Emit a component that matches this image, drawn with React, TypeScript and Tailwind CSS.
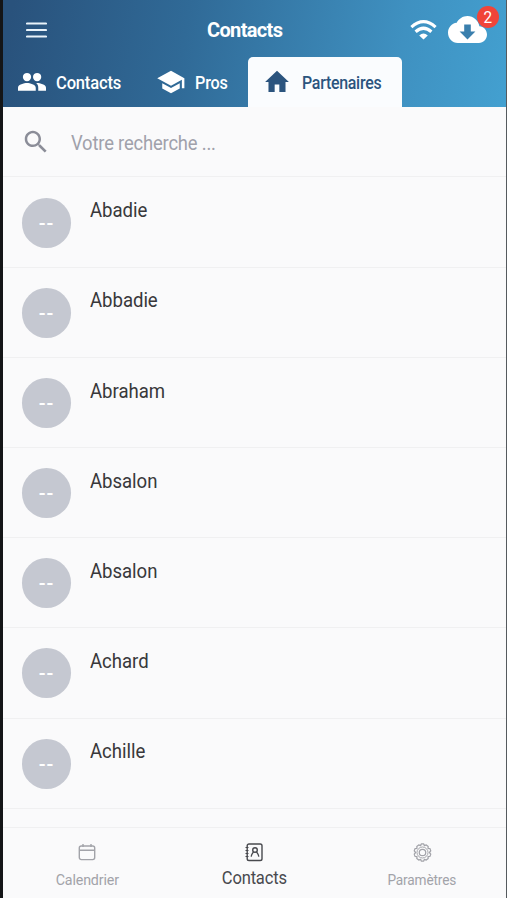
import React from "react";

const contacts = ["Abadie", "Abbadie", "Abraham", "Absalon", "Absalon", "Achard", "Achille"];

function Header() {
  return (
    <header className="flex h-[107px] shrink-0 flex-col bg-linear-[100deg,#29527c_2%,#306a97_36%,#3f91c1_78%,#43a0d0_100%] text-white">
      <div className="flex h-[57px] shrink-0 items-center">
        <svg className="mt-[2px] ml-[23px] h-[18px] w-[21px]" viewBox="0 0 20 18" preserveAspectRatio="none" stroke="#e9f3fa" strokeWidth="2.2" strokeLinecap="round">
          <path d="M1 2.5h18M1 9h18M1 15.5h18" />
        </svg>
        <h1 className="mt-[3px] ml-[160px] w-20 text-[20px] leading-6 font-bold tracking-[-0.65px] whitespace-nowrap">Contacts</h1>
        <svg className="mt-[2px] ml-[123px] h-5 w-[27px] shrink-0" viewBox="0 0 27 20" fill="none" stroke="white" strokeWidth="3.2">
          <path d="M1.4 7.1Q13.5-3.7 25.6 7.1" />
          <path d="M5.6 11.7Q13.5 4.8 21.4 11.7" />
          <path d="M9.2 15.4Q13.5 11.8 17.8 15.4L13.5 19.6Z" fill="white" stroke="none" />
        </svg>
        <div className="relative mt-[2px] ml-[11px] h-[27px] w-[39px] shrink-0">
          <svg className="h-full w-full" viewBox="0 0 39 27">
            <path fill="white" d="M31.4 10.2C30.2 4.3 25.5 0 19.5 0 14.8 0 10.7 2.8 8.7 6.8 3.8 7.3 0 11.6 0 16.8 0 22.4 4.4 27 9.8 27h21.1c4.5 0 8.1-3.8 8.1-8.4 0-4.5-3.3-8.1-7.6-8.4z" />
            <path fill="#3a7fad" d="M16.2 8.6h6.6v7h4.6l-7.9 7.8-7.9-7.8h4.6z" />
          </svg>
          <span className="absolute -top-[10px] left-[29px] flex h-[22px] w-[22px] items-center justify-center rounded-full bg-[#f04438] text-[17px] leading-none"><span className="scale-x-90">2</span></span>
        </div>
      </div>
      <nav className="flex h-[50px] text-[18px] font-medium">
        <div className="flex w-[140px] items-center pl-[14px]">
          <svg className="h-[30px] w-[30px]" viewBox="0 0 24 24" fill="white">
            <circle cx="8" cy="8" r="3.3" />
            <circle cx="16.1" cy="8" r="3.3" />
            <path d="M8 12.8c-2.33 0-7.2 1.17-7.2 3.7V19h14.2v-2.5c0-2.53-4.67-3.7-7-3.7zM16 12.8c-.29 0-.52.02-.77.05 1.16.84 1.77 1.97 1.77 3.65V19h6.2v-2.5c0-2.53-4.87-3.7-7.2-3.7z" />
          </svg>
          <span className="mt-px ml-[9px] origin-left scale-x-[0.92] tracking-[-0.2px]">Contacts</span>
        </div>
        <div className="flex w-[105px] items-center pl-[13px]">
          <svg className="h-[30px] w-[30px]" viewBox="0 0 24 24" fill="white">
            <path d="M5 13v4.2L12 21l7-3.82V13l-7 3.82zM12 3L1 9l11 6 8.7-4.75V17H22.7V9L12 3z" />
          </svg>
          <span className="mt-px ml-[9px] origin-left scale-x-[0.9] tracking-[-0.2px]">Pros</span>
        </div>
        <div className="flex w-[154px] items-center rounded-t-[5px] bg-[#fafcfe] pl-[15px] text-[#2b547e]">
          <svg className="h-[30px] w-[28px]" viewBox="0 0 24 24" preserveAspectRatio="none" fill="currentColor">
            <path d="M10 20v-6h4v6h5.3v-8h2.9L12 3 1.8 12h2.9v8z" />
          </svg>
          <span className="mt-px ml-[11px] origin-left scale-x-[0.885] tracking-[-0.3px]">Partenaires</span>
        </div>
      </nav>
    </header>
  );
}

function ContactRow({ name }: { name: string }) {
  return (
    <li className="flex h-[90.17px] border-b border-[#f0f0f1]">
      <div className="mt-5 ml-[19px] flex h-[50px] w-[49px] items-center justify-center rounded-full bg-[#c5c8d1] text-[20px] text-white">
        <span className="leading-none font-medium tracking-[1px]">--</span>
      </div>
      <span className="mt-[20.6px] ml-[19px] origin-left scale-x-[0.93] text-[20px] leading-6 tracking-[-0.05px] text-[#38383a]">{name}</span>
    </li>
  );
}

function TabBar() {
  return (
    <footer className="grid h-[71px] grid-cols-3 border-t border-[#f0f0f1] bg-[#fafafb] text-[15px] text-[#a2a3a9]">
      <div className="flex flex-col items-center pt-[15px]">
        <svg className="h-[18px] w-[18px]" viewBox="0 0 18 18" fill="none" stroke="currentColor" strokeWidth="1.4">
          <rect x="1.3" y="3" width="15.4" height="13.6" rx="2" />
          <path d="M1.5 7.3h15M5 1v3M13 1v3" />
        </svg>
        <span className="mt-[7px] scale-x-[0.95] leading-6 tracking-[-0.15px]">Calendrier</span>
      </div>
      <div className="flex flex-col items-center pt-[15px] text-[#48494e]">
        <svg className="h-[19px] w-[18px]" viewBox="0 0 18 19" fill="none" stroke="currentColor" strokeWidth="1.4">
          <rect x="2.2" y="1" width="14.8" height="16.5" rx="1.8" />
          <path d="M.5 4.5h3M.5 7.5h3M.5 10.5h3M.5 13.5h3" strokeWidth="1.1" />
          <circle cx="10" cy="7" r="2.3" />
          <path d="M6.2 13.7c.3-2.5 1.5-3.8 2.3-4.8M13.8 13.7c-.3-2.5-1.5-3.8-2.3-4.8" />
        </svg>
        <span className="mt-1 scale-x-[0.92] text-[18px] leading-6 tracking-[-0.2px]">Contacts</span>
      </div>
      <div className="flex flex-col items-center pt-[15px]">
        <svg className="h-[19px] w-[19px]" viewBox="0 0 20 20" fill="none" stroke="currentColor" strokeWidth="1.3" strokeLinejoin="round">
          <path d="M8.7 1h2.6l.7 1.8 2-.8 2 1.6-.2 2 2.1.3.8 2.4-1.5 1.7 1.5 1.7-.8 2.4-2.1.3.2 2-2 1.6-2-.8-.7 1.8H8.7L8 17.2l-2 .8-2-1.6.2-2-2.1-.3-.8-2.4L2.8 10 1.3 8.3l.8-2.4 2.1-.3L4 3.6 6 2l2 .8z" />
          <circle cx="10" cy="10" r="5.8" strokeWidth="1" />
          <circle cx="10" cy="10" r="3.4" />
        </svg>
        <span className="mt-[6px] scale-x-[0.91] leading-6 tracking-[-0.15px]">Paramètres</span>
      </div>
    </footer>
  );
}

export default function App() {
  return (
    <div className="h-[900px] w-[507px] overflow-hidden bg-white font-['Roboto',sans-serif]">
      <main className="flex h-[898px] flex-col border-r border-l-[3px] border-r-[#555a5e] border-l-[#141517] bg-[#fafafb]">
        <Header />
        <div className="flex h-[70px] shrink-0 items-center border-b border-[#f0f0f1] text-[#a0a1ab]">
          <svg className="ml-[18px] h-[30px] w-[30px]" viewBox="0 0 24 24" fill="#8b8d98">
            <path d="M15.5 14h-.79l-.28-.27C15.41 12.59 16 11.11 16 9.5 16 5.91 13.09 3 9.5 3S3 5.91 3 9.5 5.91 16 9.5 16c1.61 0 3.09-.59 4.23-1.57l.27.28v.79l5 4.99L20.49 19l-4.99-5zm-6 0C7.01 14 5 11.99 5 9.5S7.01 5 9.5 5 14 7.01 14 9.5 11.99 14 9.5 14z" />
          </svg>
          <span className="mt-[3px] ml-5 origin-left scale-x-[0.92] text-[20px] tracking-[-0.2px]">Votre recherche ...</span>
        </div>
        <ul className="flex h-[650px] shrink-0 flex-col overflow-hidden pt-[0.6px]">
          {contacts.map((name, index) => (
            <ContactRow key={index} name={name} />
          ))}
        </ul>
        <TabBar />
      </main>
    </div>
  );
}
